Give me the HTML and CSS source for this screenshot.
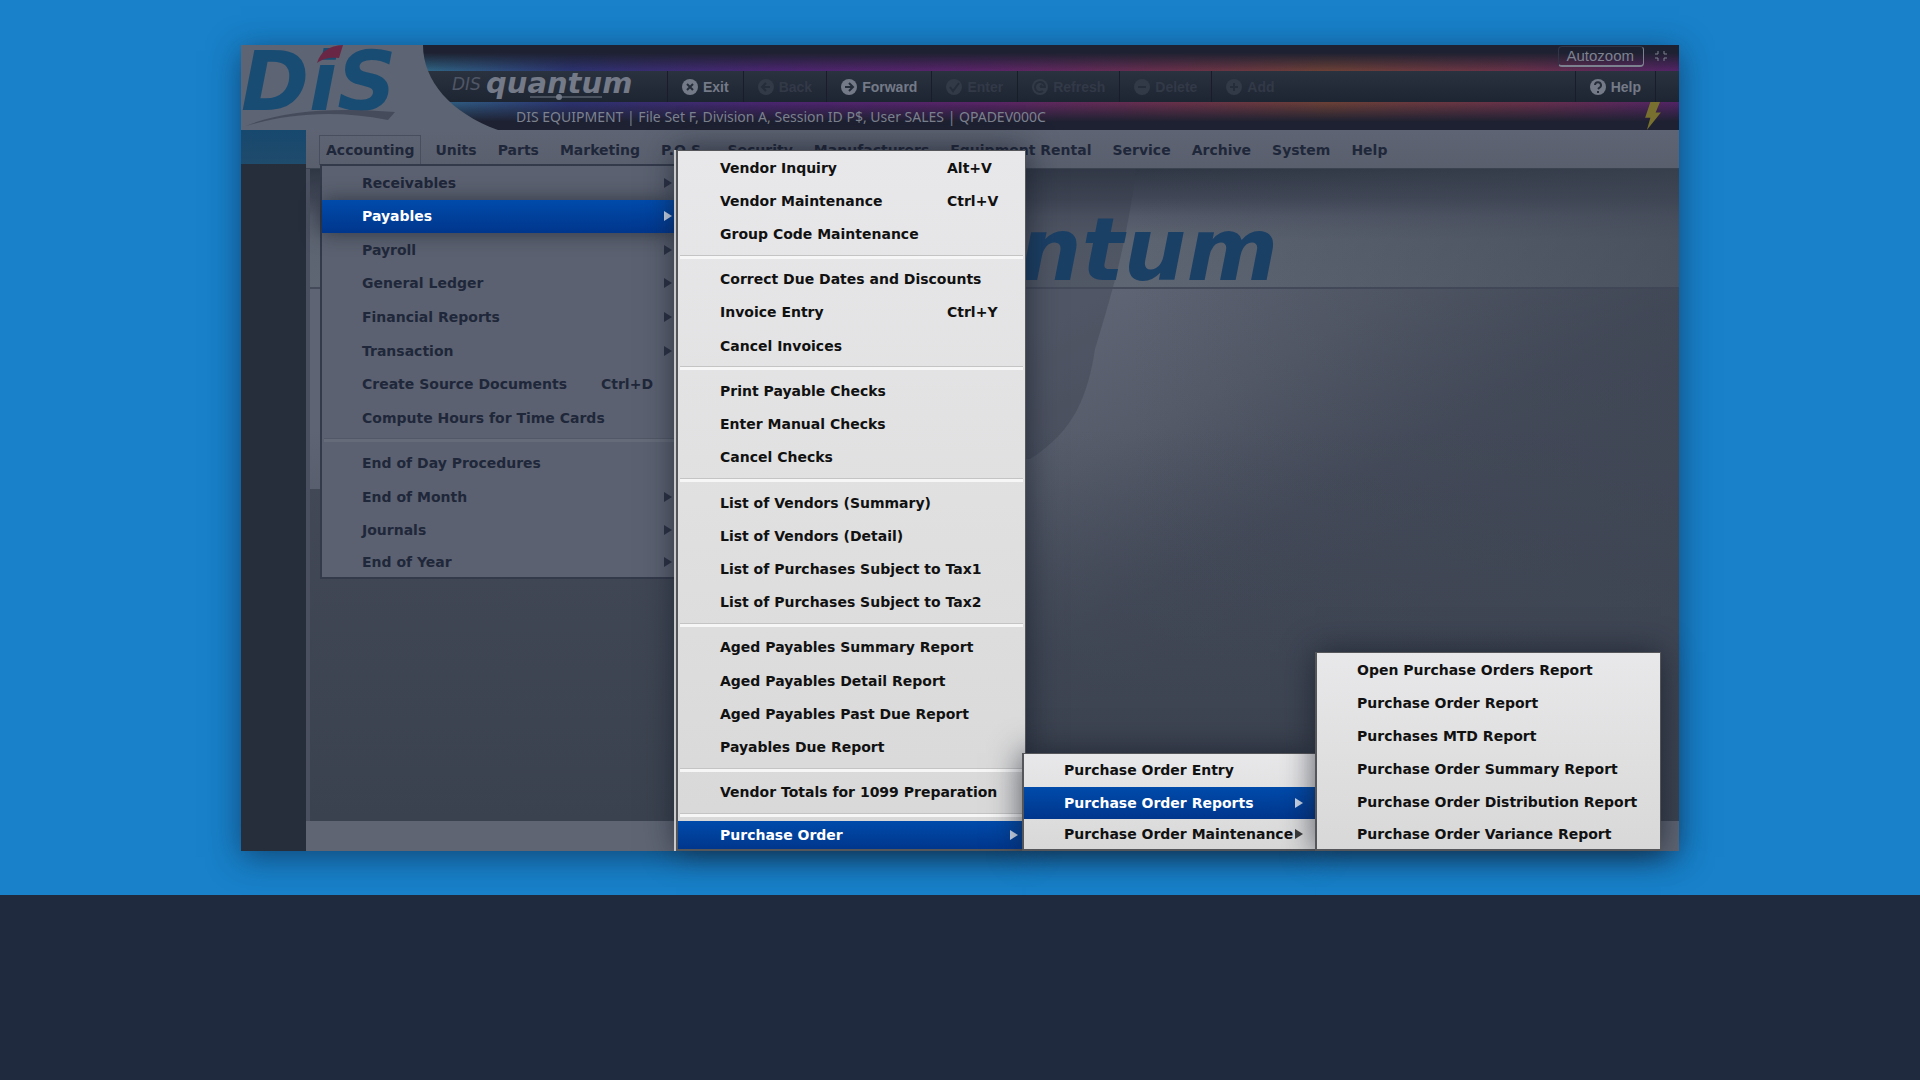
FILE: index.html
```html
<!DOCTYPE html>
<html lang="en">

<head>
    <meta charset="UTF-8">
    <meta name="viewport" content="width=device-width, initial-scale=1.0">
    <title>DIS Quantum</title>
    <link rel="stylesheet" href="styles.css">
</head>

<body>
    <section class="hero">
        <div class="screen">
            <header class="header">
                <svg class="logo" viewBox="0 0 194 85" role="img" aria-label="DIS">
                    <path d="M0 0H182C182 36 210 68 257 85H0Z" fill="#5d6473" />
                    <text x="0" y="65" class="logo-text">DiS</text>
                    <path d="M5 81C40 66 90 62 154 67L147 75C95 65 50 68 5 81Z" fill="#454b5b" />
                    <path d="M76 18C80 6 88 1 102 0L98 13C90 12 82 13 76 18Z" fill="#6a2745" />
                </svg>
                <div class="strip">
                    <a href="#" class="autozoom">Autozoom</a>
                    <svg class="shrink" viewBox="0 0 14 12"><path d="M1 4h3V1M10 1v3h3M1 8h3v3M10 11V8h3" /></svg>
                </div>
                <div class="toolbar">
                    <svg class="brand" viewBox="0 0 190 30" role="img" aria-label="DIS Quantum">
                        <text x="0" y="19" class="brand-dis">DIS</text>
                        <text x="34" y="22" class="brand-name">quantum</text>
                        <path d="M78 26H150" />
                        <circle cx="107" cy="26" r="3" />
                    </svg>
                    <button class="tool"><svg viewBox="0 0 16 16"><circle cx="8" cy="8" r="8" /><path d="M5 5l6 6M11 5l-6 6" /></svg>Exit</button>
                    <button class="tool" disabled><svg viewBox="0 0 16 16"><circle cx="8" cy="8" r="8" /><path d="M12 8H4M8 4L4 8l4 4" /></svg>Back</button>
                    <button class="tool"><svg viewBox="0 0 16 16"><circle cx="8" cy="8" r="8" /><path d="M4 8h8M8 4l4 4-4 4" /></svg>Forward</button>
                    <button class="tool" disabled><svg viewBox="0 0 16 16"><circle cx="8" cy="8" r="8" /><path d="M4 8l3 4 6-8" /></svg>Enter</button>
                    <button class="tool" disabled><svg viewBox="0 0 16 16"><circle cx="8" cy="8" r="8" /><path d="M11 12a5 5 0 1 1 2-4H8M8 8l2-2" /></svg>Refresh</button>
                    <button class="tool" disabled><svg viewBox="0 0 16 16"><circle cx="8" cy="8" r="8" /><path d="M4 8h8" /></svg>Delete</button>
                    <button class="tool" disabled><svg viewBox="0 0 16 16"><circle cx="8" cy="8" r="8" /><path d="M4 8h8M8 4v8" /></svg>Add</button>
                    <button class="tool tool-help"><svg viewBox="0 0 16 16"><circle cx="8" cy="8" r="8" /><path d="M5 6a3 3 0 1 1 4 3l-1 1M8 12v2" /></svg>Help</button>
                </div>
                <div class="status">
                    <span>DIS EQUIPMENT | File Set F, Division A, Session ID P$, User SALES | QPADEV000C</span>
                    <svg class="bolt" viewBox="0 0 18 32"><path d="M6 0H17L12 12H18L2 32L6 18H0Z" /></svg>
                </div>
            </header>

            <div class="body">
                <aside class="sidebar"></aside>
                <nav class="menubar">
                    <a href="#" class="active">Accounting</a>
                    <a href="#">Units</a>
                    <a href="#">Parts</a>
                    <a href="#">Marketing</a>
                    <a href="#">P.O.S.</a>
                    <a href="#">Security</a>
                    <a href="#">Manufacturers</a>
                    <a href="#">Equipment Rental</a>
                    <a href="#">Service</a>
                    <a href="#">Archive</a>
                    <a href="#">System</a>
                    <a href="#">Help</a>
                </nav>
                <main class="desktop">
                    <svg class="wallpaper" viewBox="0 0 1369 652" preserveAspectRatio="none">
                        <defs>
                            <linearGradient id="band" x1="0" y1="0" x2="0" y2="1">
                                <stop offset="0" stop-color="#2f3644" />
                                <stop offset="0.25" stop-color="#414756" />
                                <stop offset="0.4" stop-color="#535968" />
                                <stop offset="0.6" stop-color="#5d6471" />
                                <stop offset="1" stop-color="#5f6673" />
                            </linearGradient>
                            <linearGradient id="glow" gradientUnits="userSpaceOnUse" x1="820" y1="110" x2="990" y2="420">
                                <stop offset="0" stop-color="#5e6473" />
                                <stop offset="0.4" stop-color="#555b69" />
                                <stop offset="0.8" stop-color="#464c5b" />
                                <stop offset="1" stop-color="#444a59" />
                            </linearGradient>
                            <linearGradient id="fade" x1="0" y1="0" x2="0" y2="1">
                                <stop offset="0.4" stop-color="#3b424f" stop-opacity="0" />
                                <stop offset="1" stop-color="#3b424f" />
                            </linearGradient>
                            <linearGradient id="edge" x1="0" y1="0" x2="1" y2="0">
                                <stop offset="0.6" stop-color="#3d4452" stop-opacity="0" />
                                <stop offset="1" stop-color="#3d4452" stop-opacity="0.6" />
                            </linearGradient>
                        </defs>
                        <rect width="1369" height="652" fill="url(#glow)" />
                        <rect y="320" width="420" height="332" fill="#434957" />
                        <rect width="1369" height="119" fill="url(#band)" />
                        <path d="M400 0H826C816 80 800 130 785 180C778 225 765 262 720 290H400Z" fill="#363d4b" opacity="0.35" />
                        <rect y="118" width="1369" height="2" fill="#444a5a" />
                        <rect width="1369" height="652" fill="url(#fade)" />
                        <rect width="1369" height="652" fill="url(#edge)" />
                    </svg>
                    <span class="watermark">quantum</span>
                </main>
                <footer class="footbar"></footer>
            </div>

            <ul class="menu menu-accounting">
                <li><a href="#">Receivables</a><i class="arrow"></i></li>
                <li class="selected"><a href="#">Payables</a><i class="arrow"></i></li>
                <li><a href="#">Payroll</a><i class="arrow"></i></li>
                <li><a href="#">General Ledger</a><i class="arrow"></i></li>
                <li><a href="#">Financial Reports</a><i class="arrow"></i></li>
                <li><a href="#">Transaction</a><i class="arrow"></i></li>
                <li><a href="#">Create Source Documents</a><kbd>Ctrl+D</kbd></li>
                <li><a href="#">Compute Hours for Time Cards</a></li>
                <li class="line"></li>
                <li><a href="#">End of Day Procedures</a></li>
                <li><a href="#">End of Month</a><i class="arrow"></i></li>
                <li><a href="#">Journals</a><i class="arrow"></i></li>
                <li><a href="#">End of Year</a><i class="arrow"></i></li>
            </ul>

            <ul class="menu menu-payables">
                <li><a href="#">Vendor Inquiry</a><kbd>Alt+V</kbd></li>
                <li><a href="#">Vendor Maintenance</a><kbd>Ctrl+V</kbd></li>
                <li><a href="#">Group Code Maintenance</a></li>
                <li class="line"></li>
                <li><a href="#">Correct Due Dates and Discounts</a></li>
                <li><a href="#">Invoice Entry</a><kbd>Ctrl+Y</kbd></li>
                <li><a href="#">Cancel Invoices</a></li>
                <li class="line"></li>
                <li><a href="#">Print Payable Checks</a></li>
                <li><a href="#">Enter Manual Checks</a></li>
                <li><a href="#">Cancel Checks</a></li>
                <li class="line"></li>
                <li><a href="#">List of Vendors (Summary)</a></li>
                <li><a href="#">List of Vendors (Detail)</a></li>
                <li><a href="#">List of Purchases Subject to Tax1</a></li>
                <li><a href="#">List of Purchases Subject to Tax2</a></li>
                <li class="line"></li>
                <li><a href="#">Aged Payables Summary Report</a></li>
                <li><a href="#">Aged Payables Detail Report</a></li>
                <li><a href="#">Aged Payables Past Due Report</a></li>
                <li><a href="#">Payables Due Report</a></li>
                <li class="line"></li>
                <li><a href="#">Vendor Totals for 1099 Preparation</a></li>
                <li class="line"></li>
                <li class="selected"><a href="#">Purchase Order</a><i class="arrow"></i></li>
            </ul>

            <ul class="menu menu-order">
                <li><a href="#">Purchase Order Entry</a></li>
                <li class="selected"><a href="#">Purchase Order Reports</a><i class="arrow"></i></li>
                <li><a href="#">Purchase Order Maintenance</a><i class="arrow"></i></li>
            </ul>

            <ul class="menu menu-reports">
                <li><a href="#">Open Purchase Orders Report</a></li>
                <li><a href="#">Purchase Order Report</a></li>
                <li><a href="#">Purchases MTD Report</a></li>
                <li><a href="#">Purchase Order Summary Report</a></li>
                <li><a href="#">Purchase Order Distribution Report</a></li>
                <li><a href="#">Purchase Order Variance Report</a></li>
            </ul>
        </div>
    </section>
</body>

</html>
```

FILE: styles.css
```css
* {
    box-sizing: border-box;
}

body {
    margin: 0;
    background-color: #202a3e;
    font-family: "DejaVu Sans", Verdana, sans-serif;
}

a {
    color: inherit;
    text-decoration: none;
}

.hero {
    background-color: #1881c9;
    padding: 45px 241px 44px;
}

.screen {
    position: relative;
    background-color: #434957;
    box-shadow: 0 6px 30px rgba(10, 30, 60, 0.6);
}

/* header */
.header {
    display: grid;
    grid-template-columns: 180px 1fr;
    grid-template-rows: 26px 31px 28px;
    background-color: #1e2131;
}

.logo {
    grid-row: 1 / 4;
    width: 194px;
    height: 85px;
    overflow: visible;
    z-index: 1;
}

.logo-text {
    font: italic bold 82px "DejaVu Sans", sans-serif;
    fill: #194c73;
}

.strip {
    display: flex;
    justify-content: flex-end;
    align-items: flex-start;
    gap: 10px;
    padding: 1px 11px 0 0;
    background: linear-gradient(to bottom, #1e2131 30%, transparent), linear-gradient(to right, #2f6685, #2c3270 12%, #4b2570 28%, #5a2467 45%, #68304a 60%, #6b4036 72%, #68304a 88%, #522366);
}

.autozoom {
    border: 1px solid #303547;
    border-right-color: #7c8290;
    border-bottom: 2px solid #7c8290;
    border-radius: 4px;
    padding: 0 9px 0 7px;
    font: 15px/18px "Liberation Sans", sans-serif;
    color: #7c8290;
}

.shrink {
    width: 14px;
    height: 20px;
    fill: none;
    stroke: #7c8290;
}

.toolbar {
    display: flex;
    background: linear-gradient(to bottom, #2b323f, #1d2532);
}

.brand {
    width: 190px;
    height: 30px;
    margin: 0 25px 0 31px;
    fill: #747a88;
    stroke: none;
}

.brand path {
    stroke: #747a88;
}

.brand-dis {
    font: italic 17px "DejaVu Sans", sans-serif;
    fill: #4f5665;
}

.brand-name {
    font: italic bold 29px "DejaVu Sans", sans-serif;
}

.tool {
    display: flex;
    align-items: center;
    gap: 5px;
    border: 0;
    border-left: 1px solid #171d29;
    background: none;
    padding: 0 14px;
    font: bold 14px "Liberation Sans", sans-serif;
    color: #747a88;
}

.tool svg {
    width: 16px;
    height: 16px;
    fill: #747a88;
}

.tool path {
    fill: none;
    stroke: #262d3a;
    stroke-width: 2;
}

.tool:disabled {
    color: #323947;
}

.tool:disabled svg {
    fill: #323947;
}

.tool-help {
    margin-left: auto;
    margin-right: 23px;
    border-right: 1px solid #171d29;
}

.status {
    display: flex;
    align-items: center;
    justify-content: space-between;
    padding: 0 17px 0 95px;
    background: linear-gradient(to top, #1e2131 30%, transparent), linear-gradient(to right, #2f6685, #2c3270 12%, #4b2570 28%, #5a2467 45%, #68304a 60%, #6b4036 72%, #68304a 88%, #522366);
    font: 14px "Noto Sans", sans-serif;
    color: #7c8290;
}

.bolt {
    width: 18px;
    height: 28px;
    fill: #77702f;
}

/* main area */
.body {
    display: grid;
    grid-template-columns: 65px 1fr;
    grid-template-rows: 39px 652px 30px;
}

.sidebar {
    grid-row: 1 / 4;
    background: linear-gradient(to bottom, #17486e, #1f4b6c 34px, #262e3c 34px);
}

.menubar {
    display: flex;
    align-items: center;
    gap: 21px;
    padding-left: 20px;
    padding-top: 2px;
    background: linear-gradient(to bottom, #5e6473, #595f6d);
    border-bottom: 1px solid #3b4250;
    font-size: 14px;
    font-weight: bold;
    color: #1f273a;
    white-space: nowrap;
}

.menubar .active {
    outline: 1px solid #484e5d;
    outline-offset: 6px;
}

.desktop {
    position: relative;
    overflow: hidden;
    border-left: 4px solid #4a505f;
}

.wallpaper {
    display: block;
    width: 100%;
    height: 100%;
}

.watermark {
    position: absolute;
    left: 524px;
    top: 37px;
    font: italic bold 88px/88px "DejaVu Sans", sans-serif;
    color: #1b4066;
}

.footbar {
    background-color: #5f6573;
}

/* menus */
.menu {
    position: absolute;
    display: flex;
    flex-direction: column;
    margin: 0;
    padding: 0;
    list-style: none;
    background: linear-gradient(to bottom, #e8e8ea, #d8d8d8);
    border: 2px solid #55565a;
    border-width: 1px 1px 2px 2px;
    box-shadow: 0 0 30px rgba(20, 26, 38, 0.7);
    font-size: 14px;
    font-weight: bold;
    color: #111;
    white-space: nowrap;
}

.menu li {
    flex: 1;
    display: flex;
    align-items: center;
    padding: 0 7px 0 40px;
}

.menu li:last-child {
    flex: none;
    height: 30px;
}

.menu a {
    flex: 1;
}

.menu kbd {
    width: 71px;
    font: inherit;
}

.menu .arrow {
    border: 5px solid transparent;
    border-left: 8px solid currentColor;
    border-right: 0;
    opacity: 0.8;
}

.menu .line {
    flex: none;
    height: 12px;
    padding: 0 2px;
}

.menu .line::before {
    content: "";
    flex: 1;
    height: 3px;
    background-color: #f6f6f6;
    border-top: 1px solid #c4c4c4;
}

.menu .selected {
    background: linear-gradient(to bottom, #004bab, #00368c);
    color: #fff;
}

.menu-accounting {
    left: 79px;
    top: 119px;
    width: 356px;
    height: 415px;
    background: #5b6170;
    border: 2px solid #333a4a;
    border-right: 0;
    box-shadow: none;
    color: #1f273a;
}

.menu-accounting li {
    padding-right: 4px;
}

.menu-accounting .line::before {
    background-color: #656b79;
    border-color: #525867;
}

.menu-accounting .selected {
    box-shadow: 0 0 20px rgba(20, 26, 38, 0.6);
}

.menu-payables {
    left: 435px;
    top: 105px;
    width: 350px;
    height: 701px;
    box-shadow: -2px 0 0 #c9c9cb, 0 0 30px rgba(20, 26, 38, 0.7);
}

.menu-payables li {
    padding-left: 42px;
}

.menu-payables li:last-child {
    height: 28px;
}

.menu-order {
    left: 781px;
    top: 708px;
    width: 294px;
    height: 98px;
}

.menu-order li {
    padding-right: 12px;
}

.menu-reports {
    left: 1074px;
    top: 607px;
    width: 346px;
    height: 199px;
}
```
